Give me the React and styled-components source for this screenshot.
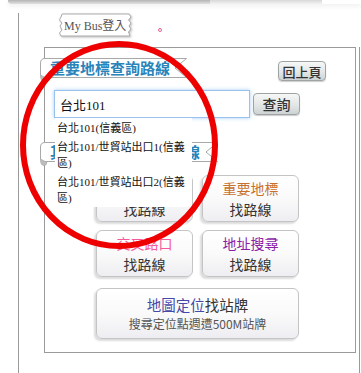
import React from "react";
import styled, { createGlobalStyle } from "styled-components";

const Global = createGlobalStyle`
  html, body { margin: 0; padding: 0; background: #fff; }
  body { font-family: "Noto Sans CJK TC", "Noto Sans", sans-serif; }
  * { box-sizing: border-box; }
`;

const Page = styled.div`
  position: relative;
  width: 361px;
  height: 373px;
  overflow: hidden;
  background: #fff;
`;

const TopShade = styled.div`
  display: flex;
  margin-left: 8px;
  height: 4px;
  box-shadow: 0 2px 5px rgba(0, 0, 0, 0.08);
  position: relative;
  z-index: 1;
`;

const ShadeSeg = styled.div`
  width: ${(p) => p.$w}px;
  height: 100%;
  background: ${(p) =>
    p.$light
      ? "linear-gradient(#d8d8d8, #f2f2f2)"
      : "linear-gradient(#b4b4b4, #e2e2e2)"};
  border-bottom-left-radius: ${(p) => (p.$light ? 0 : 3)}px;
`;

const Frame = styled.div`
  margin-left: 18px;
  border-left: 1px solid #9a9a9a;
  min-height: 369px;
`;

const LoginRow = styled.div`
  display: flex;
  align-items: flex-end;
  margin: 9px 0 0 40px;
`;

const Tag = styled.div`
  position: relative;
  width: 73px;
  height: 24px;
  display: flex;
  align-items: center;
  padding-left: 5px;
  font: 12px "Liberation Serif", "Noto Sans CJK TC", serif;
  color: #555;
  white-space: nowrap;
`;

const TagOutline = styled.svg`
  position: absolute;
  left: 0;
  top: 0;
  filter: drop-shadow(1px 1px 1px rgba(0, 0, 0, 0.25));
  z-index: 0;
`;

const TagText = styled.span`
  position: relative;
  z-index: 1;
`;

const PinkDot = styled.span`
  display: block;
  width: 4px;
  height: 4px;
  border: 1px solid #f06090;
  border-radius: 50%;
  margin: 0 0 5px 26px;
`;

const PanelWrap = styled.div`
  margin: 10px 0 0 25px;
  width: 316px;
  border-right: 1px solid #9a9a9a;
  padding-bottom: 40px;
`;

const Panel = styled.div`
  width: 312px;
  border: 1px solid #9a9a9a;
  padding: 10px 0 13px 0;
`;

const HeaderRow = styled.div`
  display: flex;
  justify-content: space-between;
  align-items: flex-start;
  padding-right: 29px;
`;

const Ribbon = styled.div`
  position: relative;
  width: ${(p) => p.$w}px;
  height: 20px;
  margin-left: -5px;
  margin-top: ${(p) => p.$mt || 0}px;
  padding-left: 10px;
  display: flex;
  align-items: center;
  font: bold 15px "Noto Sans CJK TC", sans-serif;
  color: #2a83b9;
  white-space: nowrap;
  overflow: visible;
`;

const RibbonShape = styled.svg`
  position: absolute;
  left: 0;
  top: 0;
  overflow: visible;
`;

const RibbonText = styled.span`
  position: relative;
  line-height: 20px;
`;

const GrayBtn = styled.button`
  width: ${(p) => p.$w}px;
  height: ${(p) => p.$h}px;
  margin-top: ${(p) => p.$mt || 0}px;
  padding: 0;
  border: 1px solid #9ea4a4;
  border-radius: 4px;
  background: linear-gradient(#f6f7f7, #e4e7e7 55%, #cdd2d2);
  box-shadow: 0 1px 1px rgba(0, 0, 0, 0.2);
  font: 500 ${(p) => p.$fs}px "Noto Sans CJK TC", sans-serif;
  color: #333;
  line-height: 1;
  display: flex;
  align-items: center;
  justify-content: center;
`;

const SearchRow = styled.div`
  position: relative;
  display: flex;
  align-items: center;
  gap: 3px;
  margin: 9px 0 0 9px;
`;

const Input = styled.input`
  width: 196px;
  height: 28px;
  border: 1px solid #98c2ec;
  box-shadow: 0 0 4px #a6cff7;
  outline: none;
  padding: 0 5px;
  font: 13px "Liberation Serif", "Noto Sans CJK TC", serif;
  color: #111;
  background: #fff;
`;

const Suggest = styled.ul`
  position: absolute;
  left: 1px;
  top: 28px;
  width: 137px;
  margin: 0;
  padding: 0 3px 0 2px;
  list-style: none;
  background: #fff;
  z-index: 5;
`;

const SuggestItem = styled.li`
  padding: 1.5px 0;
  font: 11px/16px "Liberation Serif", "Noto Sans CJK TC", serif;
  color: #111;
`;

const Grid = styled.div`
  display: grid;
  grid-template-columns: 97px 97px;
  column-gap: 9px;
  row-gap: 8px;
  margin: 13px 0 0 51px;
`;

const RouteBtn = styled.button`
  grid-column: ${(p) => (p.$wide ? "1 / span 2" : "auto")};
  height: ${(p) => (p.$wide ? 51 : 47)}px;
  margin-top: ${(p) => (p.$wide ? 3 : 0)}px;
  padding: 0;
  border: 1px solid #c4c4c4;
  border-radius: 6px;
  background: linear-gradient(#ffffff, #fafafa 50%, #eeeef2);
  box-shadow: -2px 2px 2px rgba(0, 0, 0, 0.14);
  display: flex;
  flex-direction: column;
  align-items: center;
  justify-content: center;
  font-family: "Noto Sans CJK TC", sans-serif;
`;

const BtnTitle = styled.span`
  font-size: ${(p) => (p.$wide ? 14.5 : 14)}px;
  line-height: ${(p) => (p.$wide ? 19 : 20.5)}px;
  color: ${(p) => p.$color || "#333"};
`;

const BtnSub = styled.span`
  font-size: ${(p) => (p.$small ? 12 : 14)}px;
  line-height: ${(p) => (p.$small ? 19 : 20.5)}px;
  color: ${(p) => (p.$small ? "#555" : "#333")};
`;

const Plain = styled.span`
  color: #333;
`;

const Mark = styled.svg`
  position: absolute;
  left: 0;
  top: 0;
  pointer-events: none;
  z-index: 10;
`;

function RibbonTab({ w, mt, children }) {
  const p = `M0.5,17 L0.5,5 Q0.5,0.5 5,0.5 L${w - 0.5},0.5 L${w - 12},10 L${w - 0.5},19.5 L5,19.5`;
  return (
    <Ribbon $w={w} $mt={mt}>
      <RibbonShape width={w} height="24" viewBox={`0 0 ${w} 24`}>
        <path d={p} fill="#fff" stroke="#a9a9a9" strokeWidth="1" />
        <path d="M0.5,17 Q0.5,23.5 4,23.5 Q7,23.5 7,19.5 L5,19.5 Z" fill="#bdbdbd" stroke="#a9a9a9" strokeWidth="0.8" />
      </RibbonShape>
      <RibbonText>{children}</RibbonText>
    </Ribbon>
  );
}

export default function App() {
  return (
    <Page>
      <Global />
      <TopShade>
        <ShadeSeg $w={202} />
        <ShadeSeg $w={112} $light />
      </TopShade>
      <Frame>
        <LoginRow>
          <Tag>
            <TagOutline width="73" height="24" viewBox="0 0 73 24">
              <path
                d="M3,1 L70,1 L72,4 L69.5,7 L72,10 L70,13 L72,16 L69.5,19 L71,23 L2,23 L0.5,20 L3,17 L1,13 L3,10 L0.5,7 L2,4 Z"
                fill="#fff"
                stroke="#ababab"
                strokeWidth="1"
              />
            </TagOutline>
            <TagText>My Bus登入</TagText>
          </Tag>
          <PinkDot />
        </LoginRow>
        <PanelWrap>
          <Panel>
            <HeaderRow>
              <RibbonTab w={147}>重要地標查詢路線</RibbonTab>
              <GrayBtn $w={48} $h={20} $fs={13} $mt={3}>回上頁</GrayBtn>
            </HeaderRow>
            <SearchRow>
              <Input defaultValue="台北101" />
              <GrayBtn $w={47} $h={22} $fs={14}>查詢</GrayBtn>
              <Suggest>
                <SuggestItem>台北101(信義區)</SuggestItem>
                <SuggestItem>台北101/世貿站出口1(信義區)</SuggestItem>
                <SuggestItem>台北101/世貿站出口2(信義區)</SuggestItem>
              </Suggest>
            </SearchRow>
            <RibbonTab w={178} mt={24}>其他方式查詢公車路線</RibbonTab>
            <Grid>
              <RouteBtn>
                <BtnTitle $color="#2f8a3a">站名站牌</BtnTitle>
                <BtnSub>找路線</BtnSub>
              </RouteBtn>
              <RouteBtn>
                <BtnTitle $color="#c8712f">重要地標</BtnTitle>
                <BtnSub>找路線</BtnSub>
              </RouteBtn>
              <RouteBtn>
                <BtnTitle $color="#f45a9c">交叉路口</BtnTitle>
                <BtnSub>找路線</BtnSub>
              </RouteBtn>
              <RouteBtn>
                <BtnTitle $color="#8a1ea6">地址搜尋</BtnTitle>
                <BtnSub>找路線</BtnSub>
              </RouteBtn>
              <RouteBtn $wide>
                <BtnTitle $wide $color="#4548a8">
                  地圖定位<Plain>找站牌</Plain>
                </BtnTitle>
                <BtnSub $small>搜尋定位點週遭500M站牌</BtnSub>
              </RouteBtn>
            </Grid>
          </Panel>
        </PanelWrap>
      </Frame>
      <Mark width="361" height="373" viewBox="0 0 361 373">
        <ellipse cx="119" cy="145" rx="96" ry="101" fill="none" stroke="#ee0000" strokeWidth="6" />
      </Mark>
    </Page>
  );
}
